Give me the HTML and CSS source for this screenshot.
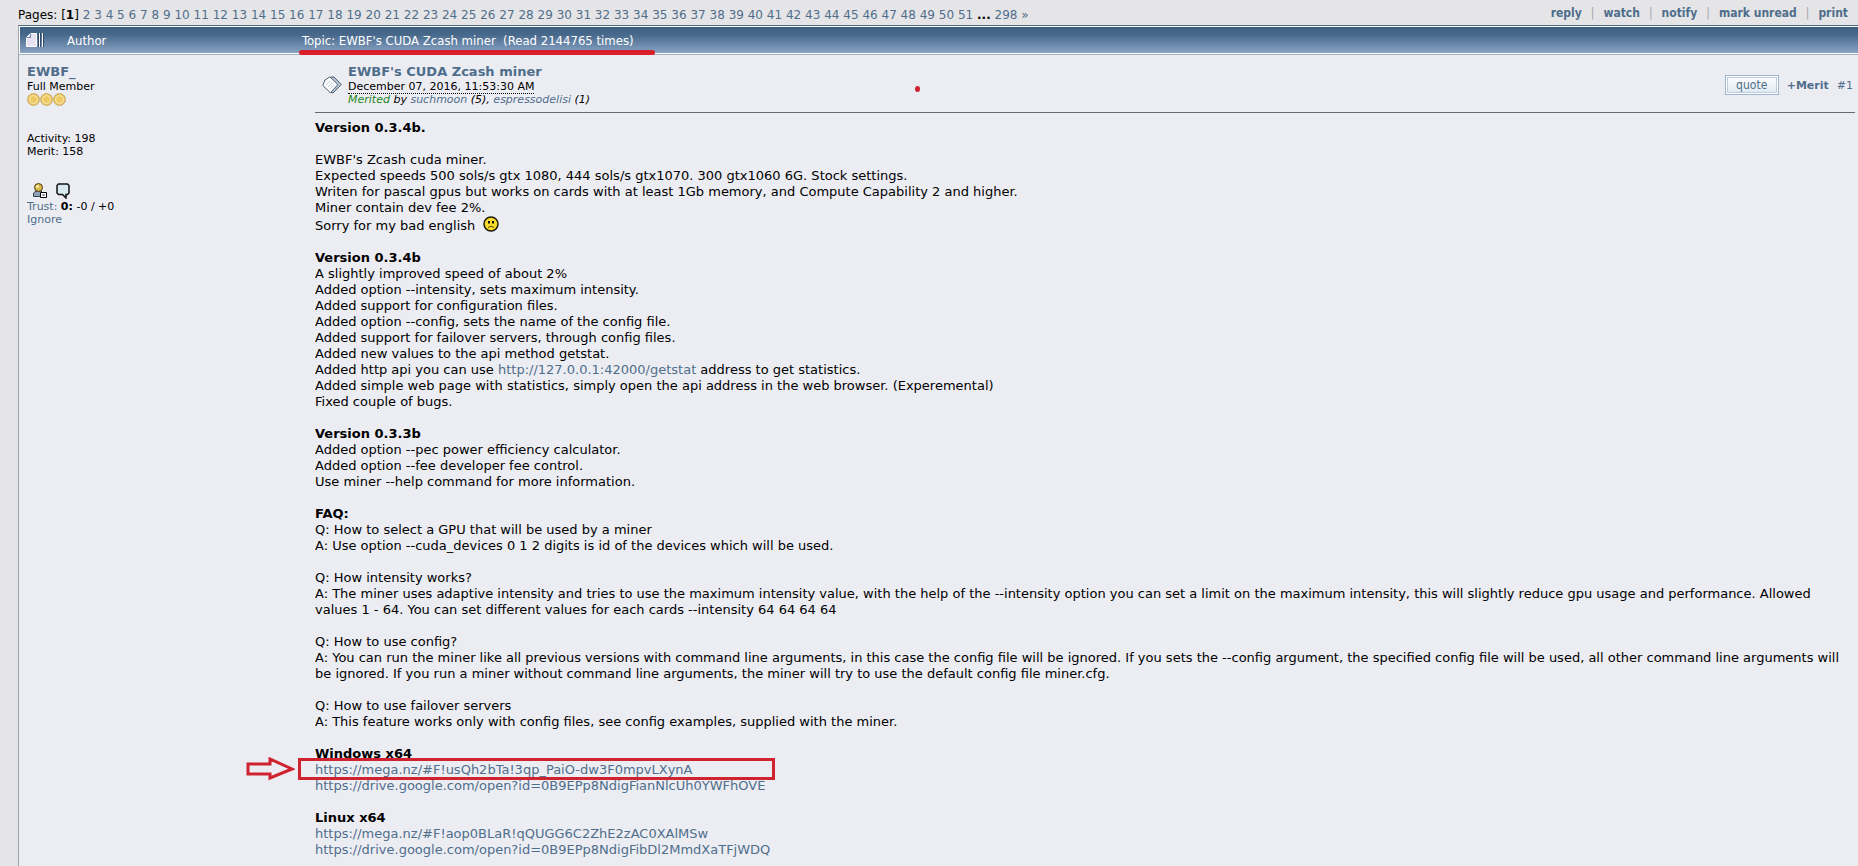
FILE: index.html
```
<!DOCTYPE html>
<html lang="en">

<head>
    <meta charset="UTF-8">
    <meta name="viewport" content="width=device-width, initial-scale=1.0">
    <title>EWBF's CUDA Zcash miner</title>
    <link rel="stylesheet" href="styles.css">
</head>

<body>
    <div class="topbar">
        <div class="pages" id="pages">Pages: [<b>1</b>] </div>
        <nav class="actions">
            <a href="#">reply</a><span>|</span><a href="#">watch</a><span>|</span><a href="#">notify</a><span>|</span><a href="#">mark unread</a><span>|</span><a href="#">print</a>
        </nav>
    </div>

    <main class="topic">
        <header class="titlebar">
            <svg class="topic-icon" width="18" height="14" viewBox="0 0 18 14">
                <path d="M4.500.5H10.500V13.500H.5V4.500Z" fill="#e6e2f2" stroke="#fff" />
                <path d="M.5 4.500H4.500V.5" fill="none" stroke="#6d7f9a" />
                <path d="M13.500 0V14M16.500 0V14" stroke="#fff" />
                <path d="M12.500 0V14M14.500 0V14M17.500 0V14" stroke="#344a68" />
            </svg>
            <span class="author-title">Author</span>
            <span class="topic-title">Topic: EWBF's CUDA Zcash miner &nbsp;(Read 2144765 times)<i class="mark-line"></i></span>
        </header>

        <div class="row">
            <aside class="poster">
                <a class="name" href="#">EWBF_</a>
                <div>Full Member</div>
                <div class="coins"><i></i><i></i><i></i></div>
                <div class="stats">Activity: 198<br>Merit: 158</div>
                <div class="contact">
                    <svg width="14" height="15" viewBox="0 0 14 15">
                        <path d="M.5 13.500V10L3 8H8L10 10V13.500Z" fill="#8fa2b8" stroke="#34414f" />
                        <circle cx="5.500" cy="4.500" r="4" fill="#d9b64a" stroke="#4c3c14" />
                        <circle cx="4.500" cy="3.500" r="1.500" fill="#fff0a8" />
                        <path d="M7.500 9.500H13.500V14.500H7.500Z" fill="#fff" stroke="#000" />
                        <path d="M9 12H12M10.500 11V13" stroke="#777" />
                    </svg>
                    <svg width="14" height="16" viewBox="0 0 14 16">
                        <path d="M2.500 1H11.500L13 2.500V10L11.500 11.500H10V15L6.500 11.500H2.500L1 10V2.500Z" fill="#d7eaf3" stroke="#111" stroke-width="1.500" />
                    </svg>
                </div>
                <div><a href="#">Trust:</a> <b>0</b><b>:</b> -0 / +0</div>
                <a href="#">Ignore</a>
            </aside>

            <article class="post">
                <div class="post-head">
                    <svg class="post-icon" width="20" height="18" viewBox="0 0 20 18">
                        <path d="M9 1H12L19.300 8.500L11 17L8.500 16Z" fill="#b8c6d8" stroke="#4c5c70" />
                        <path d="M8 .8L15.800 8.500L8.500 16.800L.8 9.500L3 4Z" fill="#fafcff" stroke="#4c5c70" />
                        <path d="M4 9L8 5M6 11L10 7M8 13L12 9" fill="none" stroke="#c3ccd6" />
                    </svg>
                    <div class="post-info">
                        <a class="name" href="#">EWBF's CUDA Zcash miner</a>
                        <div><span class="date">December 07, 2016, 11:53:30 AM</span></div>
                        <div class="merited"><span>Merited</span> by <a href="#">suchmoon</a> (5), <a href="#">espressodelisi</a> (1)</div>
                    </div>
                    <div class="post-tools">
                        <button type="button">quote</button>
                        <a class="merit" href="#">+Merit</a>
                        <a href="#">#1</a>
                    </div>
                    <i class="mark-dot"></i>
                </div>

                <div class="body">
                    <p><b>Version 0.3.4b.</b></p>
                    <p>EWBF's Zcash cuda miner.<br>
                        Expected speeds 500 sols/s gtx 1080, 444 sols/s gtx1070. 300 gtx1060 6G. Stock settings.<br>
                        Writen for pascal gpus but works on cards with at least 1Gb memory, and Compute Capability 2 and higher.<br>
                        Miner contain dev fee 2%.<br>
                        <span class="sorry">Sorry for my bad english
                            <svg width="16" height="16" viewBox="0 0 16 16">
                                <circle cx="8" cy="8" r="7" fill="#fbdc2c" stroke="#1c1a08" stroke-width="1.500" />
                                <path d="M6 5V7.500M10 5V7.500" stroke="#111" stroke-width="2" />
                                <path d="M5 11.500Q8 9 11 11.500" fill="none" stroke="#54460c" />
                            </svg>
                        </span></p>
                    <p><b>Version 0.3.4b</b><br>
                        A slightly improved speed of about 2%<br>
                        Added option --intensity, sets maximum intensity.<br>
                        Added support for configuration files.<br>
                        Added option --config, sets the name of the config file.<br>
                        Added support for failover servers, through config files.<br>
                        Added new values to the api method getstat.<br>
                        Added http api you can use <a href="#">http://127.0.0.1:42000/getstat</a> address to get statistics.<br>
                        Added simple web page with statistics, simply open the api address in the web browser. (Experemental)<br>
                        Fixed couple of bugs.</p>
                    <p><b>Version 0.3.3b</b><br>
                        Added option --pec power efficiency calculator.<br>
                        Added option --fee developer fee control.<br>
                        Use miner --help command for more information.</p>
                    <p><b>FAQ:</b><br>
                        Q: How to select a GPU that will be used by a miner<br>
                        A: Use option --cuda_devices 0 1 2 digits is id of the devices which will be used.</p>
                    <p>Q: How intensity works?<br>
                        A: The miner uses adaptive intensity and tries to use the maximum intensity value, with the help of the --intensity option you can set a limit on the maximum intensity, this will slightly reduce gpu usage and performance. Allowed values 1 - 64. You can set different values for each cards --intensity 64 64 64 64</p>
                    <p>Q: How to use config?<br>
                        A: You can run the miner like all previous versions with command line arguments, in this case the config file will be ignored. If you sets the --config argument, the specified config file will be used, all other command line arguments will be ignored. If you run a miner without command line arguments, the miner will try to use the default config file miner.cfg.</p>
                    <p>Q: How to use failover servers<br>
                        A: This feature works only with config files, see config examples, supplied with the miner.</p>
                    <p class="windows"><b>Windows x64</b><br>
                        <a href="#">https://mega.nz/#F!usQh2bTa!3qp_PaiO-dw3F0mpvLXynA</a><br>
                        <a href="#">https://drive.google.com/open?id=0B9EPp8NdigFianNlcUh0YWFhOVE</a>
                        <svg class="mark-arrow" width="49" height="24" viewBox="0 0 49 24">
                            <path d="M2 7H24V2L46 12L24 21V17H2Z" fill="none" stroke="#cf2330" stroke-width="3" />
                        </svg>
                        <i class="mark-box"></i>
                    </p>
                    <p><b>Linux x64</b><br>
                        <a href="#">https://mega.nz/#F!aop0BLaR!qQUGG6C2ZhE2zAC0XAlMSw</a><br>
                        <a href="#">https://drive.google.com/open?id=0B9EPp8NdigFibDl2MmdXaTFjWDQ</a></p>
                </div>
            </article>
        </div>
    </main>

    <script>
        const pages = document.getElementById('pages');
        let links = '';
        for (let i = 2; i <= 51; i++) {
            links += `<a href="#">${i}</a> `;
        }
        links += '<b>...</b> <a href="#">298</a> <a href="#">»</a>';
        pages.innerHTML += links;
    </script>
</body>

</html>
```
FILE: styles.css
```
body {
    margin: 0;
    padding-left: 18px;
    min-height: 100vh;
    box-sizing: border-box;
    display: flex;
    flex-direction: column;
    overflow-x: hidden;
    background-color: #e5e5e7;
    color: #000;
    font-family: Verdana, "DejaVu Sans", sans-serif;
    font-size: 13px;
    line-height: 16px;
}

a {
    color: #4f6e8b;
    text-decoration: none;
}

a:hover {
    text-decoration: underline;
}

.topbar {
    display: flex;
    justify-content: space-between;
    height: 25px;
    padding-right: 10px;
    font-size: 12px;
}

.pages {
    padding-top: 7px;
}

.actions {
    padding-top: 5px;
    font-family: Tahoma, "DejaVu Sans Condensed", sans-serif;
    font-weight: bold;
}

.actions span {
    margin: 0 9px;
    color: #a0a4aa;
    font-weight: normal;
}

.topic {
    flex: 1;
    display: flex;
    flex-direction: column;
    border-top: 1px solid #4d6b7c;
    border-left: 1px solid #a0a6ae;
    background-color: #ecedf3;
}

.titlebar {
    display: flex;
    align-items: center;
    height: 26px;
    border: solid #fff;
    border-width: 1px 0 1px 1px;
    box-shadow: 0 1px #9fb0c0;
    background: linear-gradient(#3a5f82, #48698c 30%, #88a3c4);
    color: #fff;
    font-family: Tahoma, "DejaVu Sans Condensed", sans-serif;
}

.topic-icon {
    margin-left: 6px;
}

.author-title {
    width: 235px;
    margin-left: 23px;
    padding-top: 2px;
}

.topic-title {
    position: relative;
    padding-top: 2px;
}

.row {
    flex: 1;
    display: flex;
    padding-top: 10px;
}

.name {
    display: block;
    font-size: 13px;
    font-weight: bold;
    line-height: 16px;
}

.poster {
    flex: 0 0 288px;
    padding-left: 8px;
    box-sizing: border-box;
    font-size: 11px;
    line-height: 13px;
}

.coins {
    display: flex;
    height: 13px;
}

.coins i {
    width: 13px;
    height: 13px;
    box-sizing: border-box;
    border: 1px solid #cfae68;
    border-radius: 50%;
    background: radial-gradient(circle, #edca60 35%, #f8e3a0 50%, #e2b850 70%);
}

.stats {
    margin-top: 26px;
}

.contact {
    display: flex;
    gap: 9px;
    height: 16px;
    padding: 25px 0 1px 6px;
}

.post {
    flex: 1;
    min-width: 0;
    padding: 0 3px 8px 8px;
}

.post-head {
    position: relative;
    display: flex;
    align-items: center;
    padding-bottom: 6px;
    border-bottom: 1px solid #696875;
    font-size: 11px;
    line-height: 13px;
}

.post-icon {
    margin: 0 6px 0 7px;
}

.date {
    border-bottom: 1px dotted #000;
}

.merited {
    font-style: italic;
}

.merited span {
    color: #1d861d;
}

.post-tools {
    display: flex;
    align-items: center;
    gap: 8px;
    margin-left: auto;
    padding-right: 2px;
}

.post-tools button {
    width: 54px;
    height: 20px;
    padding: 0;
    border: 1px solid #9db3d0;
    box-shadow: inset 0 0 0 1px #fff, inset 0 0 0 2px #bccde0;
    background: linear-gradient(#fff, #dde8f0);
    color: #4f6e8b;
    font-family: Tahoma, "DejaVu Sans Condensed", sans-serif;
    font-size: 12px;
    cursor: pointer;
}

.merit {
    font-weight: bold;
}

.body {
    padding-top: 7px;
}

.body p {
    margin: 0 0 16px;
}

.sorry svg {
    margin-left: 4px;
    vertical-align: -2px;
}

.windows {
    position: relative;
}

/* red pen marks drawn over the post */
.mark-line {
    position: absolute;
    left: -3px;
    top: 19px;
    width: 356px;
    height: 5px;
    border-radius: 3px;
    background-color: #d81f2a;
}

.mark-dot {
    position: absolute;
    left: 600px;
    top: 22px;
    width: 5px;
    height: 6px;
    border-radius: 50%;
    background-color: #cf2330;
}

.mark-box {
    position: absolute;
    left: -17px;
    top: 12px;
    width: 477px;
    height: 22px;
    box-sizing: border-box;
    border: 3px solid #cf2330;
}

.mark-arrow {
    position: absolute;
    left: -69px;
    top: 11px;
}
```
